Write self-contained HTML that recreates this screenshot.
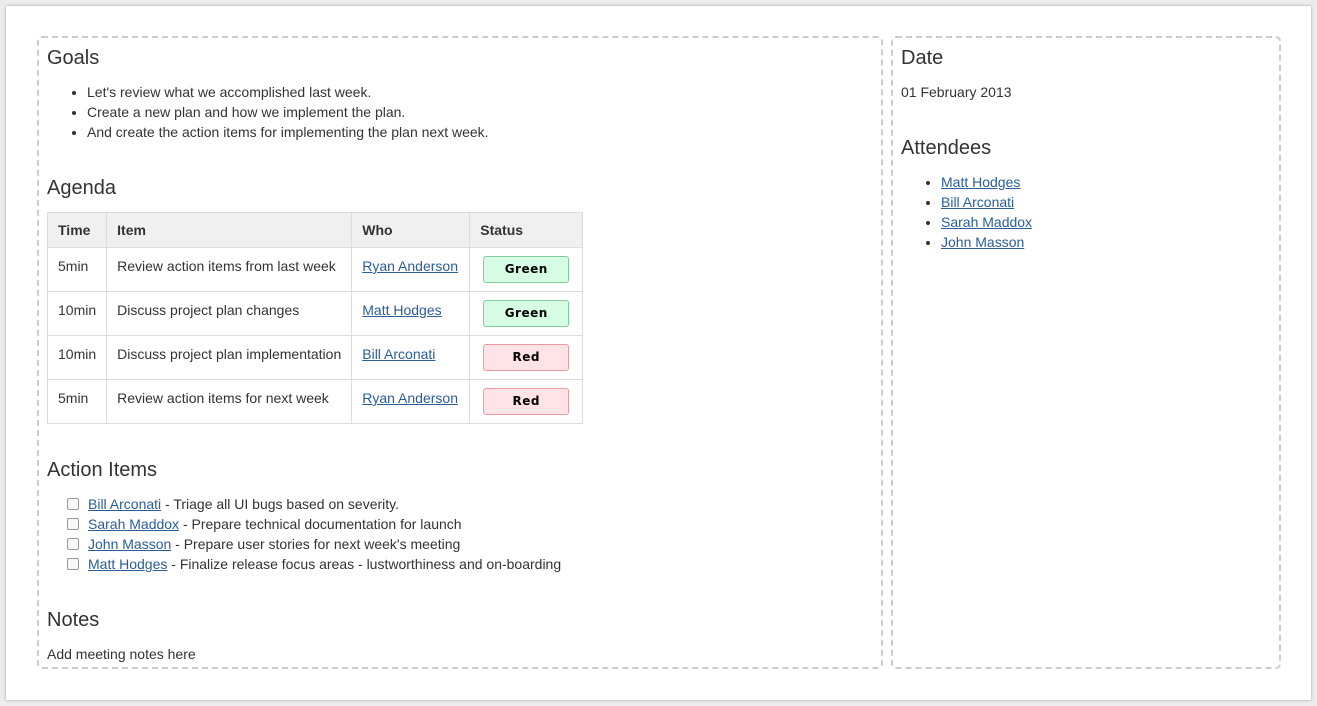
<!DOCTYPE html>
<html><head><style>
body{margin:0;background:#ececec;font-family:"Liberation Sans",Arial,sans-serif;color:#333;font-size:14px;}
.card{position:absolute;left:6px;top:6px;width:1305px;height:694px;background:#fff;box-shadow:0 0 3px rgba(0,0,0,.3);}
.box{position:absolute;border:2px dashed #ccc;border-radius:5px;box-sizing:border-box;}
.a{position:absolute;white-space:nowrap;}
h2{font-weight:normal;font-size:20px;margin:0;position:absolute;color:#333;}
a{color:#2a5d9a;text-decoration:underline;}
ul{position:absolute;margin:0;padding-left:20px;}
li{line-height:20px;}
table{position:absolute;left:47px;top:212px;border-collapse:collapse;}
td,th{border:1px solid #ddd;text-align:left;vertical-align:top;padding:0 10px;height:44px;box-sizing:border-box;white-space:nowrap;}
th{background:#f0f0f0;height:35px;vertical-align:middle;font-weight:bold;}
td{padding-top:10px;}
.b{display:block;width:86px;height:27px;box-sizing:border-box;border-radius:3px;font-size:12px;font-weight:bold;text-align:center;line-height:25px;color:#000;margin:-2px 0 0 3px;letter-spacing:.5px;font-family:"DejaVu Sans",sans-serif}
.g{background:#d6fde4;border:1px solid #7fce9c;}
.r{background:#ffe3e6;border:1px solid #ee9aa1;}
.cb{display:inline-block;width:10px;height:10px;border:1px solid #999;border-radius:2px;background:#f8f8f8;vertical-align:-1px;margin-right:9px;}
</style></head><body>
<div class="card"></div>
<div class="box" style="left:37px;top:36px;width:846px;height:633px"></div>
<div class="box" style="left:891px;top:36px;width:390px;height:633px"></div>

<h2 style="left:47px;top:47px">Goals</h2>
<ul style="left:67px;top:82px">
<li>Let's review what we accomplished last week.</li>
<li>Create a new plan and how we implement the plan.</li>
<li>And create the action items for implementing the plan next week.</li>
</ul>
<h2 style="left:47px;top:177px">Agenda</h2>
<table>
<tr><th style="width:59px">Time</th><th style="width:245px">Item</th><th style="width:118px">Who</th><th style="width:113px">Status</th></tr>
<tr><td>5min</td><td>Review action items from last week</td><td><a>Ryan Anderson</a></td><td><span class="b g">Green</span></td></tr>
<tr><td>10min</td><td>Discuss project plan changes</td><td><a>Matt Hodges</a></td><td><span class="b g">Green</span></td></tr>
<tr><td>10min</td><td>Discuss project plan implementation</td><td><a>Bill Arconati</a></td><td><span class="b r">Red</span></td></tr>
<tr><td>5min</td><td>Review action items for next week</td><td><a>Ryan Anderson</a></td><td><span class="b r">Red</span></td></tr>
</table>
<h2 style="left:47px;top:459px">Action Items</h2>
<div class="a" style="left:67px;top:494px;line-height:20px">
<div><span class="cb"></span><a>Bill Arconati</a> - Triage all UI bugs based on severity.</div>
<div><span class="cb"></span><a>Sarah Maddox</a> - Prepare technical documentation for launch</div>
<div><span class="cb"></span><a>John Masson</a> - Prepare user stories for next week's meeting</div>
<div><span class="cb"></span><a>Matt Hodges</a> - Finalize release focus areas - lustworthiness and on-boarding</div>
</div>
<h2 style="left:47px;top:609px">Notes</h2>
<div class="a" style="left:47px;top:646px">Add meeting notes here</div>

<h2 style="left:901px;top:47px">Date</h2>
<div class="a" style="left:901px;top:84px">01 February 2013</div>
<h2 style="left:901px;top:137px">Attendees</h2>
<ul style="left:921px;top:172px">
<li><a>Matt Hodges</a></li><li><a>Bill Arconati</a></li><li><a>Sarah Maddox</a></li><li><a>John Masson</a></li>
</ul>
</body></html>
